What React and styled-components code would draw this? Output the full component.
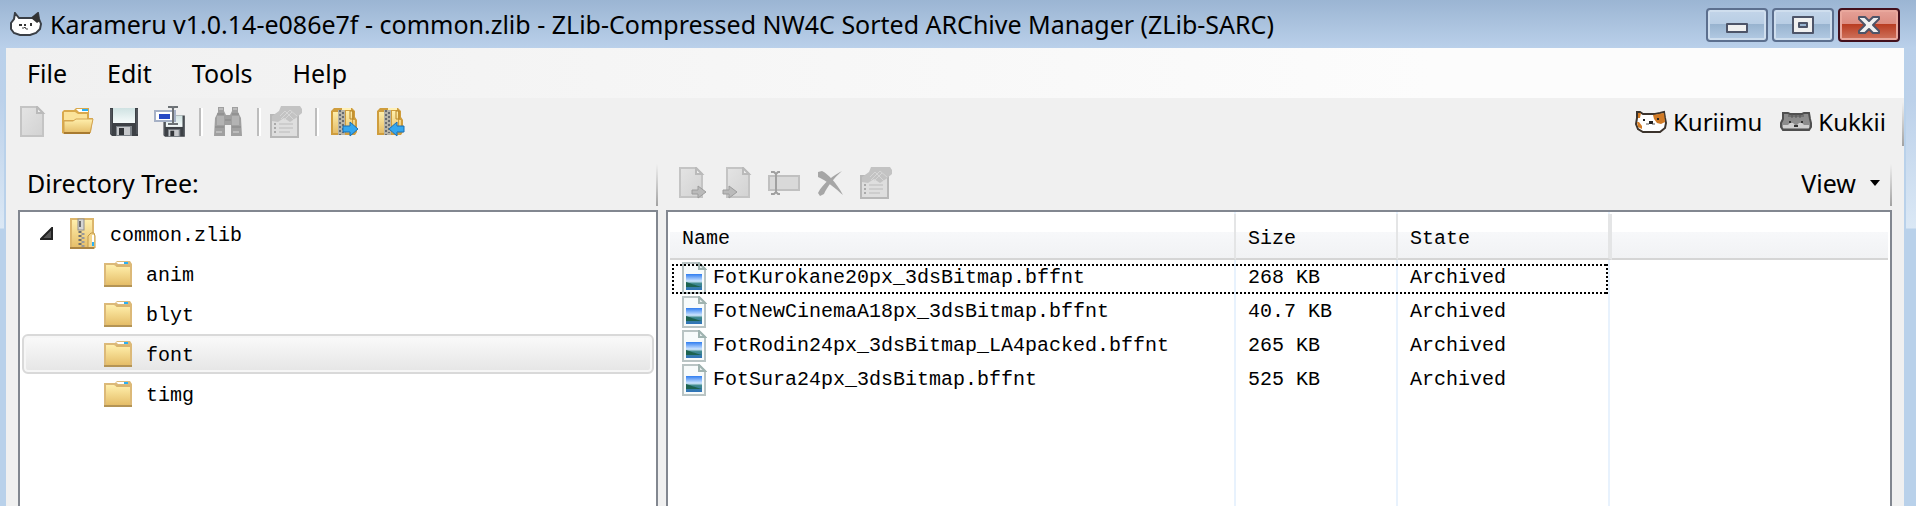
import React from "react";
import styled, { createGlobalStyle, css } from "styled-components";

const ui = `"Noto Sans", "Open Sans", sans-serif`;
const mono = `"Liberation Mono", "DejaVu Sans Mono", monospace`;

const columns = { name: 566, size: 162, state: 214 };
const columnsWidth = columns.name + columns.size + columns.state;

const Global = createGlobalStyle`
  *, *::before, *::after { box-sizing: border-box; }
  body { margin: 0; font: 25px/32px ${ui}; color: #000; }
  button { font: inherit; color: inherit; border: 0; padding: 0; background: none; }
  svg { display: block; flex: none; }
`;

const Window = styled.div`
  min-height: 100vh;
  display: flex;
  flex-direction: column;
  background: linear-gradient(#9bb5d3 0, #bad0ea 48px, #bcd1ea 100px, #dbe8f5 228px, #b9d1ea 229px);
`;

const TitleBar = styled.header`
  display: flex;
  align-items: center;
  gap: 8px;
  height: 48px;
  padding: 0 16px 0 10px;
`;

const Title = styled.h1`
  flex: 1;
  margin: 0;
  font-size: 25px;
  font-weight: 400;
  white-space: nowrap;
`;

const CaptionButtons = styled.div`
  display: flex;
  gap: 4px;
`;

const CaptionButton = styled.button`
  width: 62px;
  height: 34px;
  margin-top: 2px;
  display: grid;
  place-items: center;
  border: 2px solid ${(p) => (p.$close ? "#43101c" : "#5c6f8e")};
  border-radius: 4px;
  box-shadow: inset 0 0 0 2px ${(p) => (p.$close ? "#e9a79c" : "#cfdeee")};
  background: ${(p) =>
    p.$close
      ? "linear-gradient(#e5a198 0, #dc8c80 48%, #b93d22 48%, #d07560 100%)"
      : "linear-gradient(#c3d5e9 0, #b8cde4 48%, #98b3cf 48%, #b4cbe4 100%)"};
`;

const Client = styled.div`
  flex: 1;
  display: flex;
  flex-direction: column;
  margin: 0 10px 0 4px;
  border: solid #b9d1ea;
  border-width: 0 2px;
  background: #f0f0f0;
`;

const MenuBar = styled.nav`
  display: flex;
  height: 50px;
  align-items: center;
  gap: 40px;
  padding-left: 21px;
  background: linear-gradient(to right, #f0f0f0, #fcfcfc 75%);
`;

const MenuItem = styled.button``;

const edge = css`
  border-right: 2px solid;
  border-image: linear-gradient(#f0f0f0 10%, #a0a0a0) 1;
`;

const ToolStrip = styled.div`
  display: flex;
  align-items: center;
  height: ${(p) => (p.$main ? 48 : 46)}px;
  padding-left: 3px;
  ${edge}
`;

const ToolButton = styled.button`
  width: 46px;
  height: 46px;
  display: grid;
  place-items: center;
`;

const Separator = styled.span`
  width: 12px;
  height: 28px;
  padding-left: 6px;
  flex: none;
  &::before {
    content: "";
    display: block;
    width: 4px;
    height: 28px;
    background: linear-gradient(to right, #bdbdbd 50%, #fff 50%);
  }
`;

const Links = styled.div`
  display: flex;
  gap: 18px;
  margin-left: auto;
  padding-right: 16px;
  font-size: 24px;
`;

const LinkButton = styled.button`
  display: flex;
  align-items: center;
  gap: 6px;
`;

const Panels = styled.main`
  flex: 1;
  display: grid;
  grid-template-columns: 640px minmax(0, 1fr);
  gap: 8px;
  padding: 14px 12px 0;
`;

const Panel = styled.section`
  display: flex;
  flex-direction: column;
  gap: 4px;
`;

const PanelTitle = styled.h2`
  margin: 0;
  padding-left: 6px;
  font-size: 25px;
  font-weight: 400;
`;

const ViewButton = styled.button`
  display: flex;
  align-items: center;
  gap: 14px;
  margin-left: auto;
  padding-right: 10px;
`;

const Well = styled.div`
  flex: 1;
  border: 2px solid #828790;
  border-bottom: 0;
  padding: 2px 2px 0;
  background: #fff;
  font: 20px/30px ${mono};
`;

const Tree = styled.ul`
  margin: 0;
  padding: 0;
  list-style: none;
`;

const TreeRow = styled.div`
  display: flex;
  align-items: center;
  gap: 14px;
  height: 40px;
  padding-left: ${(p) => (p.$root ? 18 : 82)}px;
  ${(p) =>
    p.$selected &&
    css`
      padding-left: 80px;
      border: 2px solid #d9d9d9;
      border-radius: 6px;
      box-shadow: inset 0 0 0 2px #f6f6f6;
      background: linear-gradient(#fafafa, #e5e5e5);
    `}
`;

const TreeLabel = styled.span`
  padding-top: 4px;
`;

const columnLine = (x) =>
  `linear-gradient(to right, transparent ${x}px, #e8f2fd ${x}px, #e8f2fd ${x + 2}px, transparent ${x + 2}px)`;

const ListWell = styled(Well)`
  background-color: #fff;
  background-image: ${[columns.name, columns.name + columns.size, columnsWidth - 2].map(columnLine).join(", ")};
`;

const Table = styled.table`
  width: 100%;
  table-layout: fixed;
  border-collapse: separate;
  border-spacing: 0;
  text-align: left;
`;

const Head = styled.th`
  height: 46px;
  padding: 6px 0 0 12px;
  font-weight: 400;
  border-right: ${(p) => p.$divider}px solid #e4e5e6;
  border-bottom: 2px solid #d5d5d5;
  background: linear-gradient(#fff 0, #fff 18px, #f7f8fa 18px, #f1f2f4 44px);
`;

const Row = styled.tr`
  position: relative;
  ${(p) =>
    p.$focused &&
    css`
      &::after {
        content: "";
        position: absolute;
        top: 4px;
        left: 2px;
        width: ${columnsWidth - 6}px;
        height: 30px;
        --dots: repeating-linear-gradient(to right, #000 0 2px, transparent 2px 4px);
        --side: repeating-linear-gradient(#000 0 2px, transparent 2px 4px);
        background:
          var(--dots) top / 100% 2px no-repeat,
          var(--dots) bottom / 100% 2px no-repeat,
          var(--side) left / 2px 100% no-repeat,
          var(--side) right / 2px 100% no-repeat;
      }
    `}
`;

const Cell = styled.td`
  height: 34px;
  padding: 2px 0 0 12px;
  white-space: nowrap;
`;

const FileName = styled.span`
  display: flex;
  align-items: center;
  gap: 6px;
`;

/* ---------- icons, on a 32-unit grid ---------- */

const Icon = ({ w = 32, h = 32, children }) => (
  <svg width={w} height={h} viewBox={`0 0 ${w} ${h}`} aria-hidden="true">
    {children}
  </svg>
);

const HiddenDefs = styled.svg`
  position: absolute;
`;

const Defs = () => (
  <HiddenDefs width="0" height="0" aria-hidden="true">
    <defs>
      <linearGradient id="gold" x2="0" y2="1"><stop stopColor="#ffefac" /><stop offset="1" stopColor="#e5bd68" /></linearGradient>
      <linearGradient id="gray" x2="1" y2="1"><stop stopColor="#e4e4e4" /><stop offset="1" stopColor="#d2d2d2" /></linearGradient>
      <linearGradient id="sky" x2="0" y2="1"><stop stopColor="#2f7df0" /><stop offset=".45" stopColor="#cfe6ff" /><stop offset=".6" stopColor="#3f8a8c" /><stop offset="1" stopColor="#2f72bd" /></linearGradient>
      <linearGradient id="glass" x2="0" y2="1"><stop stopColor="#cfe2e2" /><stop offset="1" stopColor="#f6fbfb" /></linearGradient>
    </defs>
  </HiddenDefs>
);

const GrayPage = ({ x = 4 }) => (
  <g transform={`translate(${x} 0)`}>
    <path d="M1 1H17L23 7V30H1Z" fill="url(#gray)" stroke="#c4c4c4" strokeWidth="2" />
    <path d="M17 1V7H23Z" fill="#eee" stroke="#bababa" strokeWidth="2" />
  </g>
);

const NewIcon = () => <Icon><GrayPage /></Icon>;

const OpenIcon = () => (
  <Icon>
    <path d="M0 27V6L2 4H12L14 2H27V12H31L29 26L27 28H2Z" fill="#d9a94c" />
    <path d="M2 6H13L16 8H25V14H2Z" fill="#fbe39a" />
    <path d="M14 3H26V6H17Z" fill="#fff" />
    <path d="M20 3H26V5H20Z" fill="#29b1f5" />
    <path d="M2 15H11L14 13H31L28 27H2Z" fill="url(#gold)" stroke="#d2a351" strokeWidth="1" />
    <path d="M2 27H28" stroke="#a87a30" strokeWidth="2" />
  </Icon>
);

const Floppy = () => (
  <g>
    <path d="M2 2H30V30H4L2 28Z" fill="#3d4146" />
    <rect x="5" y="2" width="22" height="15" fill="url(#glass)" />
    <rect x="8" y="20" width="16" height="10" fill="#7d8389" />
    <rect x="9" y="21" width="13" height="8" fill="#c6c8cb" />
    <rect x="11" y="22" width="5" height="7" fill="#33363a" />
    <path d="M3 3V28M29 3V28" stroke="#62666c" strokeWidth="1" />
  </g>
);

const SaveIcon = () => <Icon><Floppy /></Icon>;

const SaveAsIcon = () => (
  <Icon>
    <g transform="translate(8 8) scale(.76)"><Floppy /></g>
    <rect x="1" y="5" width="20" height="10" fill="#fff" stroke="#a6b1c6" strokeWidth="2" />
    <rect x="5" y="8" width="11" height="5" fill="#2548c4" />
    <path d="M14 1H18L19 2L20 1H24M19 2V17M14 18H24" stroke="#6d7276" strokeWidth="2" fill="none" />
  </Icon>
);

const FindIcon = () => (
  <Icon>
    <path d="M6 1H12V5L14 9H18L20 5V1H26V6L29 12L30 30H19V19H13V30H2L3 12L6 6Z" fill="#a0a0a0" />
    <path d="M5 10H12V19H5ZM20 10H27V19H20Z" fill="#b3b3b3" />
    <path d="M3 21H12M20 21H29M5 8H12M20 8H27M13 14H19" stroke="#868686" strokeWidth="1" />
    <path d="M7 3H11M21 3H25M4 26H10M21 26H27" stroke="#bcbcbc" strokeWidth="2" />
  </Icon>
);

const PropertiesIcon = () => (
  <Icon>
    <rect x="1" y="9" width="27" height="22" fill="#dedede" stroke="#b8b8b8" strokeWidth="2" />
    <path d="M2 15V10L9 5L11 0H30L32 3V7L26 12L20 16L14 12L8 16Z" fill="#c3c3c3" />
    <path d="M10 10L15 5L24 14M11 13L20 4L27 10M14 14L22 6" fill="none" stroke="#d6d6d6" strokeWidth="1" />
    <path d="M4 18H6M4 22H6M4 26H6" stroke="#aaa" strokeWidth="2" />
    <path d="M9 18H23M9 22H23M9 26H20" stroke="#bcbcbc" strokeWidth="1" />
  </Icon>
);

const ArchiveArrow = ({ inward }) => (
  <Icon>
    <path d="M3 5L6 2H24L27 5V11L29 14V26L27 29H3Z" fill="#cf9d3d" />
    <path d="M5 6H10V27H5ZM18 5H24V27H18ZM25 14H27V26H25Z" fill="url(#gold)" />
    <path d="M14 2H23V4H14Z" fill="#fff0b6" />
    <rect x="10" y="4" width="7" height="25" fill="#b5b3a8" />
    <path d="M12 4V29M15 6V27" stroke="#686b70" strokeWidth="2" strokeDasharray="2 2" />
    <path d="M22 5H25V13H22Z" fill="none" stroke="#b88628" strokeWidth="1" />
    <path
      transform={inward ? "translate(45 0) scale(-1 1)" : undefined}
      d="M15 20H22V16L30 23L22 30V26H15Z"
      fill="#35a7ee" stroke="#1b6fb4" strokeWidth="1"
    />
  </Icon>
);

const AddIcon = () => (
  <Icon>
    <GrayPage x={3} />
    <path d="M16 23H22V19L30 25L22 31V27H16Z" fill="#bababa" stroke="#9c9c9c" />
  </Icon>
);
const ExtractIcon = () => (
  <Icon>
    <GrayPage x={4} />
    <path d="M1 23H7V19L15 25L7 31V27H1Z" fill="#bababa" stroke="#9c9c9c" />
  </Icon>
);
const RenameIcon = () => (
  <Icon>
    <rect x="1" y="9" width="30" height="14" fill="#d9d9d9" stroke="#c0c0c0" strokeWidth="2" />
    <path d="M3 5H6L8 7L10 5H12M8 7V25M3 27H6L8 25L10 27H12" fill="none" stroke="#a0a0a0" strokeWidth="2" />
  </Icon>
);
const DeleteIcon = () => (
  <Icon>
    <path d="M4 5L8 4C14 7 22 15 29 28C22 22 12 13 4 10Z" fill="#a6a6a6" />
    <path d="M28 4C20 8 9 16 4 26L6 29L10 27C13 20 20 11 28 4Z" fill="#a6a6a6" />
  </Icon>
);

const FolderIcon = () => (
  <Icon w={28} h={28}>
    <path d="M0 26V3H11L13 1H26L28 4V26Z" fill="#dcb978" />
    <path d="M12 2H24V4H14Z" fill="#fff" />
    <path d="M20 2H24V4H20Z" fill="#29b1f5" />
    <path d="M2 5H10L13 7H26V25H2Z" fill="url(#gold)" />
    <path d="M12 6H26" stroke="#d6b167" strokeWidth="1" />
    <path d="M0 26H28" stroke="#b49455" strokeWidth="2" />
  </Icon>
);

const ZipIcon = () => (
  <Icon w={28}>
    <rect x="2" y="0" width="24" height="31" fill="#dcb66c" />
    <rect x="4" y="2" width="20" height="28" fill="url(#gold)" />
    <path d="M20 30V18L23 15H26L27 18V30Z" fill="#f3d68e" stroke="#c39a48" strokeWidth="1" />
    <path d="M24 17H26V24H24Z" fill="#fff" />
    <path d="M24 24H26V28H24Z" fill="#29b1f5" />
    <rect x="10" y="1" width="6" height="11" fill="#d5d5d3" stroke="#8f8f8f" />
    <path d="M12 3V9" stroke="#6d6d6d" strokeWidth="2" />
    <path d="M12 13V30" stroke="#707070" strokeWidth="3" strokeDasharray="2 2" />
    <path d="M15 15V30" stroke="#9a9a9a" strokeWidth="3" strokeDasharray="2 2" />
    <path d="M2 30H26" stroke="#ab8444" strokeWidth="2" />
  </Icon>
);

const ImageFileIcon = () => (
  <Icon w={25}>
    <path d="M1 1H17L23 7V31H1Z" fill="#f7fbfb" stroke="#b9c4c4" strokeWidth="2" />
    <path d="M17 1V7H23Z" fill="#e6eeee" stroke="#9fb3b0" strokeWidth="2" />
    <rect x="4" y="12" width="16" height="16" fill="url(#sky)" />
    <path d="M4 20C8 21 12 23 20 25H4Z" fill="#1d6350" />
  </Icon>
);

const Expander = () => <Icon w={14} h={14}><path d="M1 12L12 1V12Z" fill="#555" stroke="#222" strokeWidth="2" /></Icon>;
const DownArrow = () => <Icon w={10} h={6}><path d="M0 0H10L5 6Z" /></Icon>;

const BlackEaredCat = () => (
  <Icon h={24}>
    <path d="M5 1L9 6H22L28 1L29 7L31 12L30 17L26 21L20 23H10L4 21L1 17V11L4 7Z" fill="#fff" stroke="#3a3f46" strokeWidth="2" />
    <path d="M21 6L28 1L30 9L27 11Z" fill="#333" />
    <path d="M9 12H12V14H9ZM20 11H22V14H20ZM14 12H16V14H14Z" fill="#333" />
    <path d="M12 16H14L15 15L16 17H18" fill="none" stroke="#444" strokeWidth="1" />
  </Icon>
);

const CalicoCat = () => (
  <Icon h={24}>
    <path d="M2 2H5L8 4H20L25 3L29 2L30 8L31 13L30 18L25 22H8L3 19L1 14L2 8Z" fill="#fff" stroke="#3b332c" strokeWidth="2" />
    <path d="M3 3H6L5 8H3ZM2 12H4L7 16V19L3 17ZM18 5L29 3L30 12L26 14L22 13L19 9Z" fill="#d07a25" />
    <path d="M8 9H10V11H8ZM22 8H24V10H22ZM14 11H18V14H14Z" fill="#222" />
    <path d="M11 14H14M17 14H20" stroke="#555" strokeWidth="1" />
  </Icon>
);

const TabbyCat = () => (
  <Icon h={24}>
    <path d="M3 3H8L10 4H22L24 3H29L30 9L31 13V17L29 20H3L1 17V13L3 9Z" fill="#8c8c8c" stroke="#4f4f4f" strokeWidth="2" />
    <path d="M12 4V8M16 4V8M20 4V8M8 6H24" stroke="#555" strokeWidth="1" />
    <path d="M3 15H8L10 13H13L15 15H17L19 13H22L24 15H29V18H3Z" fill="#cfcfcf" />
    <path d="M9 11H11V13H9ZM21 11H23V13H21ZM14 15H18V17H14Z" fill="#333" />
  </Icon>
);

const glyph = { fill: "#f0f0f0", stroke: "#4d5468", strokeWidth: 2, strokeLinejoin: "round" };
const MinimizeGlyph = () => <Icon w={24} h={20}><rect x="2" y="9" width="20" height="8" {...glyph} /></Icon>;
const MaximizeGlyph = () => (
  <Icon w={24} h={20}><path fillRule="evenodd" d="M2 2H22V18H2ZM8 8V12H16V8Z" {...glyph} /></Icon>
);
const CloseGlyph = () => (
  <Icon w={24} h={20}><path d="M2 2H8L12 6L16 2H22V4L16 10L22 16V18H16L12 14L8 18H2V16L8 10L2 4Z" {...glyph} /></Icon>
);

/* ---------- data ---------- */

const folders = ["anim", "blyt", "font", "timg"];
const files = [
  ["FotKurokane20px_3dsBitmap.bffnt", "268 KB", "Archived"],
  ["FotNewCinemaA18px_3dsBitmap.bffnt", "40.7 KB", "Archived"],
  ["FotRodin24px_3dsBitmap_LA4packed.bffnt", "265 KB", "Archived"],
  ["FotSura24px_3dsBitmap.bffnt", "525 KB", "Archived"],
];

const Tool = ({ label, children }) => <ToolButton aria-label={label}>{children}</ToolButton>;

export default function App() {
  return (
    <Window>
      <Global />
      <Defs />
      <TitleBar>
        <BlackEaredCat />
        <Title>Karameru v1.0.14-e086e7f - common.zlib - ZLib-Compressed NW4C Sorted ARChive Manager (ZLib-SARC)</Title>
        <CaptionButtons>
          <CaptionButton aria-label="Minimize"><MinimizeGlyph /></CaptionButton>
          <CaptionButton aria-label="Maximize"><MaximizeGlyph /></CaptionButton>
          <CaptionButton $close aria-label="Close"><CloseGlyph /></CaptionButton>
        </CaptionButtons>
      </TitleBar>
      <Client>
        <MenuBar>
          {["File", "Edit", "Tools", "Help"].map((m) => <MenuItem key={m}>{m}</MenuItem>)}
        </MenuBar>
        <ToolStrip $main>
          <Tool label="New"><NewIcon /></Tool>
          <Tool label="Open"><OpenIcon /></Tool>
          <Tool label="Save"><SaveIcon /></Tool>
          <Tool label="Save as"><SaveAsIcon /></Tool>
          <Separator />
          <Tool label="Find"><FindIcon /></Tool>
          <Separator />
          <Tool label="Properties"><PropertiesIcon /></Tool>
          <Separator />
          <Tool label="Extract archive"><ArchiveArrow /></Tool>
          <Tool label="Import archive"><ArchiveArrow inward /></Tool>
          <Links>
            <LinkButton><CalicoCat />Kuriimu</LinkButton>
            <LinkButton><TabbyCat />Kukkii</LinkButton>
          </Links>
        </ToolStrip>
        <Panels>
          <Panel>
            <ToolStrip><PanelTitle>Directory Tree:</PanelTitle></ToolStrip>
            <Well>
              <Tree>
                <li>
                  <TreeRow $root><Expander /><ZipIcon /><TreeLabel>common.zlib</TreeLabel></TreeRow>
                  <Tree>
                    {folders.map((f) => (
                      <li key={f}>
                        <TreeRow $selected={f === "font"}><FolderIcon /><TreeLabel>{f}</TreeLabel></TreeRow>
                      </li>
                    ))}
                  </Tree>
                </li>
              </Tree>
            </Well>
          </Panel>
          <Panel>
            <ToolStrip>
              <Tool label="Add file"><AddIcon /></Tool>
              <Tool label="Extract file"><ExtractIcon /></Tool>
              <Tool label="Rename"><RenameIcon /></Tool>
              <Tool label="Delete"><DeleteIcon /></Tool>
              <Tool label="File properties"><PropertiesIcon /></Tool>
              <ViewButton>View<DownArrow /></ViewButton>
            </ToolStrip>
            <ListWell>
              <Table>
                <colgroup>
                  <col width={columns.name} />
                  <col width={columns.size} />
                  <col width={columns.state} />
                  <col />
                </colgroup>
                <thead>
                  <tr>
                    <Head $divider={2}>Name</Head>
                    <Head $divider={2}>Size</Head>
                    <Head $divider={4}>State</Head>
                    <Head as="td" $divider={0} />
                  </tr>
                </thead>
                <tbody>
                  {files.map(([name, size, state], i) => (
                    <Row key={name} $focused={i === 0}>
                      <Cell><FileName><ImageFileIcon />{name}</FileName></Cell>
                      <Cell>{size}</Cell>
                      <Cell>{state}</Cell>
                    </Row>
                  ))}
                </tbody>
              </Table>
            </ListWell>
          </Panel>
        </Panels>
      </Client>
    </Window>
  );
}
